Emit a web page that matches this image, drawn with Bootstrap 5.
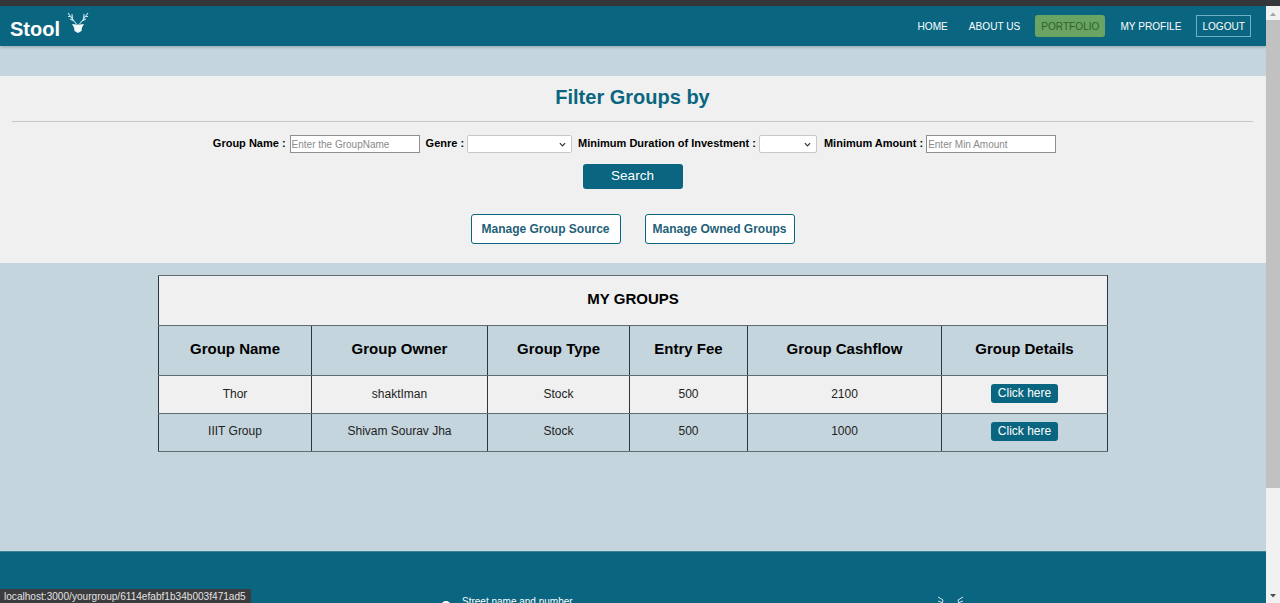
<!DOCTYPE html>
<html lang="en">
<head>
    <meta charset="UTF-8">
    <meta name="viewport" content="width=device-width, initial-scale=1.0">
    <title>Stool</title>
    <link href="https://cdn.jsdelivr.net/npm/bootstrap@5.3.0/dist/css/bootstrap.min.css" rel="stylesheet">
    <style>
        html, body {
            height: 603px;
            overflow: hidden;
        }
        body {
            font-family: "Liberation Sans", Arial, sans-serif;
            background-color: #c5d5dd;
            color: #000;
        }
        .top-strip {
            height: 6px;
            background-color: #35363a;
        }
        .frame-row {
            height: 597px;
        }
        .page-col {
            width: 1266px;
            overflow: hidden;
        }
        .stool-nav {
            height: 40px;
            background-color: #0a6680;
            box-shadow: 0 1px 3px rgba(0, 0, 0, 0.25);
            padding: 0 15px 0 10px;
        }
        .brand-name {
            font-size: 20px;
            font-weight: 700;
            color: #fff;
            margin-top: 6px;
        }
        .brand-deer {
            margin: -5px 0 0 7px;
        }
        .nav-item-link {
            font-size: 10.1px;
            color: #fff;
            text-decoration: none;
            height: 22px;
            line-height: 24px;
            padding: 0 6px;
            border-radius: 3px;
        }
        .nav-links {
            gap: 9px;
        }
        .nav-active {
            background-color: #6aa463;
            color: #2f6128;
        }
        .nav-logout {
            border: 1px solid #6fb0c6;
            border-radius: 0;
            line-height: 22px;
            padding: 0 5px;
        }
        .filter-panel {
            margin-top: 30px;
            height: 187px;
            background-color: #f0f0f0;
            padding: 0 13px 0 12px;
        }
        .filter-title {
            font-size: 20px;
            font-weight: 700;
            color: #0a6680;
            line-height: 23px;
            padding-top: 10px;
            margin: 0;
            text-align: center;
        }
        .filter-rule {
            margin: 12px 0 13px;
            border-top: 1px solid #c6c6c6;
            opacity: 1;
        }
        .filter-form {
            height: 18px;
            gap: 3px;
            margin-top: 1px;
            padding-left: 4px;
        }
        .filter-label {
            font-size: 11px;
            font-weight: 700;
            margin: 0;
            padding-bottom: 2px;
        }
        .filter-input {
            height: 18px;
            font-size: 10px;
            padding: 0 1px;
            background-color: #fff;
            border: 1px solid #8f8f8f;
            border-radius: 0;
            font-family: "Liberation Sans", Arial, sans-serif;
        }
        .filter-input::placeholder {
            color: #8a8a8a;
        }
        .filter-select {
            height: 18px;
            appearance: none;
            background-color: #fff;
            background-image: url("data:image/svg+xml,%3csvg xmlns='http://www.w3.org/2000/svg' viewBox='0 0 8 5'%3e%3cpath fill='none' stroke='%23333' stroke-width='1.4' d='M1 1l3 3 3-3'/%3e%3c/svg%3e");
            background-repeat: no-repeat;
            background-position: right 5px center;
            background-size: 7px 5px;
            border: 1px solid #c8c8c8;
            border-radius: 2px;
            font-size: 9px;
        }
        .w-name { width: 130px; margin: 0 3px 0 1px; }
        .w-genre { width: 105px; margin-right: 3px; }
        .w-dur { width: 58px; margin-right: 4px; }
        .w-amount { width: 130px; }
        .search-btn {
            display: block;
            width: 100px;
            height: 25px;
            margin: 11px auto 25px;
            padding: 0 0 1px;
            font-size: 13.5px;
            color: #fff;
            background-color: #0a6680;
            border: 0;
            border-radius: 3px;
        }
        .manage-row {
            gap: 24px;
        }
        .manage-btn {
            height: 30px;
            width: 150px;
            padding: 0;
            font-size: 12px;
            font-weight: 700;
            line-height: 28px;
            color: #1f5f78;
            background-color: #fff;
            border: 1px solid #0a6680;
            border-radius: 3px;
        }
        .table-wrap {
            width: 950px;
            margin: 12px 0 0 158px;
        }
        .groups-table {
            width: 949px;
            table-layout: fixed;
            border-collapse: collapse;
            color: #000;
        }
        .groups-table th, .groups-table td {
            border-style: solid;
            border-width: 1px;
            border-color: #5f6c72 #2a373c;
            text-align: center;
            vertical-align: middle;
            padding: 0 0 2px;
        }
        .groups-table th {
            height: 50px;
            font-size: 15px;
            font-weight: 700;
        }
        .groups-table td {
            height: 38px;
            font-size: 12px;
            color: #222;
        }
        .groups-table tr.shade-light > * {
            background-color: #f0f0f0;
        }
        .groups-table tr.shade-blue > * {
            background-color: #c5d5dd;
        }
        .groups-table tbody tr.shade-blue td {
            padding-bottom: 3px;
        }
        .c1 { width: 153px; }
        .c2 { width: 176px; }
        .c3 { width: 142px; }
        .c4 { width: 118px; }
        .c5 { width: 194px; }
        .c6 { width: 166px; }
        .details-btn {
            display: inline-block;
            width: 67px;
            height: 19px;
            line-height: 19px;
            font-size: 12px;
            color: #fff;
            background-color: #0a6680;
            border-radius: 3px;
            text-decoration: none;
        }
        .site-footer {
            margin-top: 99px;
            height: 60px;
            background-color: #0a6680;
            border-top: 1px solid #3c8197;
            color: #fff;
        }
        .foot-address {
            margin-left: 441px;
            padding-top: 44px;
            gap: 11px;
            font-size: 10px;
            line-height: 11px;
        }
        .foot-dot {
            width: 10px;
            height: 10px;
            margin-top: 5px;
            border-radius: 50%;
            background-color: #fff;
        }
        .foot-deer {
            margin-left: 362px;
        }
        .scroll-rail {
            width: 14px;
            background-color: #f1f1f1;
        }
        .scroll-arrow {
            height: 14px;
        }
        .scroll-thumb {
            height: 468px;
            background-color: #c1c1c1;
        }
        .status-tip {
            position: absolute;
            left: 0;
            bottom: 0;
            width: 251px;
            height: 14px;
            line-height: 15px;
            padding-left: 4px;
            font-size: 10.1px;
            white-space: nowrap;
            color: #e2e2e2;
            background-color: #3b3c3e;
        }
    </style>
</head>
<body>
    <div class="top-strip"></div>
    <div class="d-flex frame-row">
        <div class="page-col">
            <nav class="stool-nav d-flex align-items-center justify-content-between">
                <div class="d-flex align-items-center">
                    <span class="brand-name">Stool</span>
                    <svg class="brand-deer" width="22" height="24" viewBox="0 0 22 24" fill="none" stroke="#c4e2ea" stroke-width="1.1">
                        <path d="M9.5 12 L7 9 L1 1 M7 9 L3 7 M5.5 7 L5 2 M3.5 4.5 L1 4.5 M12.5 12 L15 9 L21 1 M15 9 L19 7 M16.5 7 L17 2 M18.5 4.5 L21 4.5"/>
                        <path d="M5 12 L9 12.5 L13 12.5 L17 12 L15 15.5 L14.5 19 L11 21 L7.5 19 L7 15.5 Z" fill="#f2fafc" stroke="none"/>
                    </svg>
                </div>
                <div class="nav-links d-flex align-items-center">
                    <a class="nav-item-link" href="#">HOME</a>
                    <a class="nav-item-link" href="#">ABOUT US</a>
                    <a class="nav-item-link nav-active" href="#">PORTFOLIO</a>
                    <a class="nav-item-link" href="#">MY PROFILE</a>
                    <a class="nav-item-link nav-logout" href="#">LOGOUT</a>
                </div>
            </nav>

            <section class="filter-panel">
                <h1 class="filter-title">Filter Groups by</h1>
                <hr class="filter-rule">
                <form class="filter-form d-flex align-items-center justify-content-center">
                    <label class="filter-label">Group Name :</label>
                    <input class="filter-input w-name" type="text" placeholder="Enter the GroupName">
                    <label class="filter-label">Genre :</label>
                    <select class="filter-select w-genre"></select>
                    <label class="filter-label">Minimum Duration of Investment :</label>
                    <select class="filter-select w-dur"></select>
                    <label class="filter-label">Minimum Amount :</label>
                    <input class="filter-input w-amount" type="text" placeholder="Enter Min Amount">
                </form>
                <button class="search-btn" type="button">Search</button>
                <div class="manage-row d-flex justify-content-center">
                    <button class="manage-btn" type="button">Manage Group Source</button>
                    <button class="manage-btn" type="button">Manage Owned Groups</button>
                </div>
            </section>

            <div class="table-wrap">
                <table class="groups-table">
                    <colgroup>
                        <col class="c1"><col class="c2"><col class="c3"><col class="c4"><col class="c5"><col class="c6">
                    </colgroup>
                    <thead>
                        <tr class="shade-light"><th colspan="6">MY GROUPS</th></tr>
                        <tr class="shade-blue">
                            <th>Group Name</th>
                            <th>Group Owner</th>
                            <th>Group Type</th>
                            <th>Entry Fee</th>
                            <th>Group Cashflow</th>
                            <th>Group Details</th>
                        </tr>
                    </thead>
                    <tbody>
                        <tr class="shade-light">
                            <td>Thor</td>
                            <td>shaktIman</td>
                            <td>Stock</td>
                            <td>500</td>
                            <td>2100</td>
                            <td><a class="details-btn" href="#">Click here</a></td>
                        </tr>
                        <tr class="shade-blue">
                            <td>IIIT Group</td>
                            <td>Shivam Sourav Jha</td>
                            <td>Stock</td>
                            <td>500</td>
                            <td>1000</td>
                            <td><a class="details-btn" href="#">Click here</a></td>
                        </tr>
                    </tbody>
                </table>
            </div>

            <footer class="site-footer d-flex">
                <div class="foot-address d-flex">
                    <span class="foot-dot"></span>
                    <span>Street name and number</span>
                </div>
                <svg class="foot-deer" width="32" height="60" viewBox="0 0 32 60" fill="none" stroke="#cfe6ee" stroke-width="1">
                    <path d="M3 45 L8 48 L7 52 M3 49 L8 51 M28 45 L23 48 L24 52 M28 49 L23 51"/>
                </svg>
            </footer>
        </div>
        <aside class="scroll-rail d-flex flex-column">
            <div class="scroll-arrow d-flex justify-content-center">
                <svg width="8" height="14" viewBox="0 0 8 14"><path d="M1 10 L4 6.5 L7 10 Z" fill="#a3a3a3"/></svg>
            </div>
            <div class="scroll-thumb"></div>
            <div class="flex-grow-1"></div>
            <div class="scroll-arrow d-flex justify-content-center">
                <svg width="8" height="14" viewBox="0 0 8 14"><path d="M1 5 L4 8.5 L7 5 Z" fill="#505050"/></svg>
            </div>
        </aside>
    </div>
    <div class="status-tip">localhost:3000/yourgroup/6114efabf1b34b003f471ad5</div>
</body>
</html>
